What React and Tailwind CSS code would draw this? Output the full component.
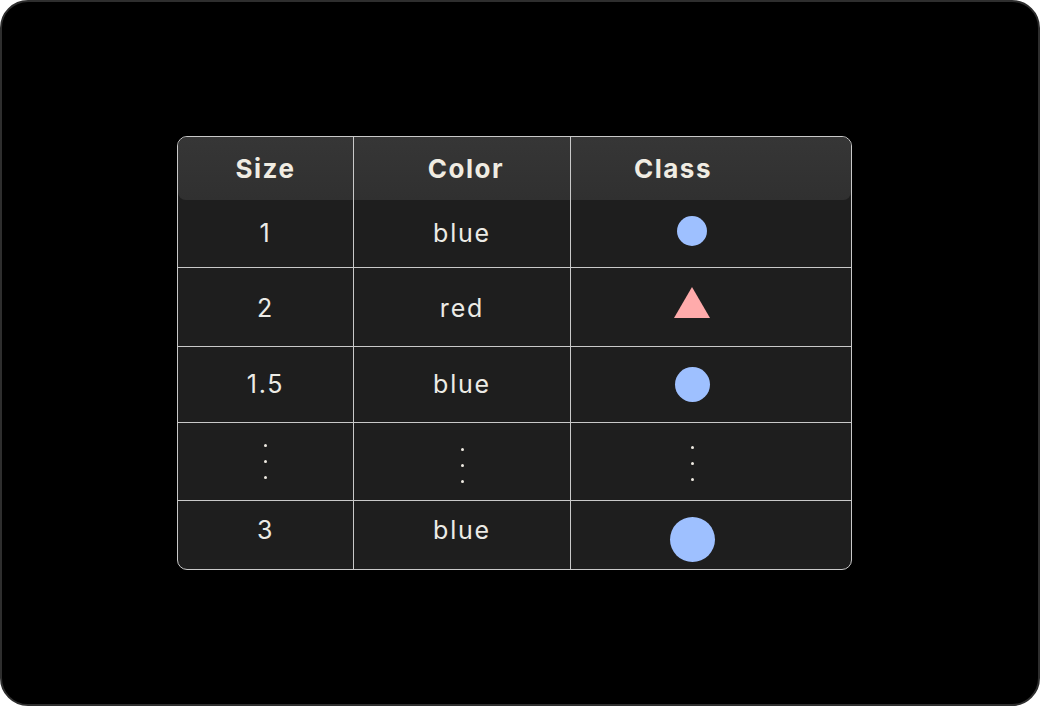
const rows = [
  { size: '1', color: 'blue', shape: 'circle', d: 30, h: 'h-[67px]', nudge: '' },
  { size: '2', color: 'red', shape: 'triangle', h: 'h-[79px]', nudge: 'mt-[3px]' },
  { size: '1.5', color: 'blue', shape: 'circle', d: 35, h: 'h-[76px]', nudge: '' },
  { size: 'dots', color: 'dots', shape: 'dots', h: 'h-[78px]', nudge: '' },
  { size: '3', color: 'blue', shape: 'circle', d: 45, h: 'h-[69px]', nudge: '-mt-[8px]' },
];

function Dots({ shift = '' }) {
  return (
    <div className={`flex flex-col items-center gap-[13px] ${shift}`}>
      <span className="w-[3px] h-[3px] rounded-full bg-[#eeeae2]" />
      <span className="w-[3px] h-[3px] rounded-full bg-[#eeeae2]" />
      <span className="w-[3px] h-[3px] rounded-full bg-[#eeeae2]" />
    </div>
  );
}

function Shape({ row }) {
  if (row.shape === 'dots') return <Dots shift="mt-[4px]" />;
  if (row.shape === 'triangle') {
    return (
      <svg width="36" height="31" viewBox="0 0 36 31" className="-mt-[10px]">
        <polygon points="18,0 36,31 0,31" fill="#ffabab" />
      </svg>
    );
  }
  const cls = row.d === 30 ? 'w-[30px] h-[30px] -mt-[6px]' : row.d === 35 ? 'w-[35px] h-[35px]' : 'w-[45px] h-[45px] mt-[8px]';
  return <div className={`rounded-full bg-[#9ec0ff] ${cls}`} />;
}

export default function App() {
  return (
    <div className="w-[1040px] h-[706px] bg-white" style={{ fontFamily: '"Inter", "Liberation Sans", sans-serif' }}>
      <div className="w-full h-full bg-black rounded-[28px] border-2 border-[#2e2e2e] pt-[134px] pl-[175px]">
        <div className="w-[675px] border border-[#c9c9c9] rounded-[10px] overflow-hidden bg-[#1e1e1e] text-[#ecebe6]">
          <div className="h-[63px] bg-gradient-to-b from-[#363636] to-[#303030] rounded-[8px] grid grid-cols-[176px_217px_1fr] text-[26px] font-bold text-[#f0ece2] tracking-[1.5px]">
            <div className="flex items-center justify-center border-r border-[#c9c9c9]">Size</div>
            <div className="flex items-center justify-center pl-[8px] border-r border-[#c9c9c9]">Color</div>
            <div className="flex items-center pl-[63px]">Class</div>
          </div>
          {rows.map((r, i) => (
            <div key={i} className={`grid grid-cols-[176px_217px_1fr] ${r.h} ${i > 0 ? 'border-t border-[#c9c9c9]' : ''} text-[25px] tracking-[1.8px]`}>
              <div className="flex items-center justify-center border-r border-[#c9c9c9]">
                {r.size === 'dots' ? <Dots /> : <span className={r.nudge}>{r.size}</span>}
              </div>
              <div className="flex items-center justify-center border-r border-[#c9c9c9]">
                {r.color === 'dots' ? <Dots shift="mt-[8px]" /> : <span className={r.nudge}>{r.color}</span>}
              </div>
              <div className="flex items-center justify-center pr-[38px]">
                <Shape row={r} />
              </div>
            </div>
          ))}
        </div>
      </div>
    </div>
  );
}
